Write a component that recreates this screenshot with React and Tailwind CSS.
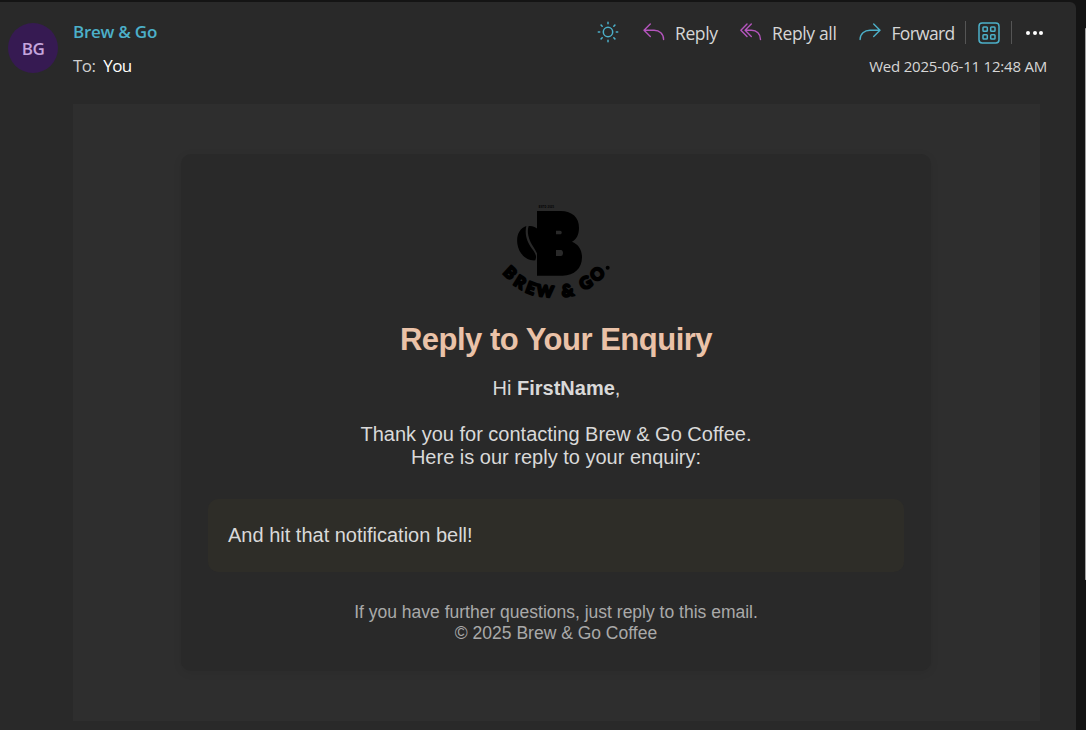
const LOGO_LETTERS = [
  { ch: 'B', x: 61, y: 233, r: 43, s: 49 },
  { ch: 'R', x: 90, y: 261, r: 32, s: 49 },
  { ch: 'E', x: 123, y: 279, r: 20, s: 49 },
  { ch: 'W', x: 165, y: 288, r: 7, s: 48 },
  { ch: '&', x: 233, y: 286, r: -9, s: 50 },
  { ch: 'G', x: 287, y: 263, r: -30, s: 50 },
  { ch: 'O', x: 322, y: 237, r: -42, s: 50 },
];

function Logo() {
  return (
    <svg className="mr-[2px] block h-[110px] w-[130px]" viewBox="0 0 390 330">
      <text x="169" y="39" fontSize="8" fontWeight="700" textAnchor="middle" textLength="46" fontFamily="Liberation Sans, sans-serif">ESTD 2025</text>
      <path
        fillRule="evenodd"
        d="M141 48H212C247 48 267 68 267 98C267 119 260 132 246 140C264 147 276 163 276 187C276 220 253 242 218 242H141ZM198 107V118H210C217 118 217 107 210 107ZM198 165V183H213C221 183 221 165 213 165Z"
      />
      <path d="M109 93C87 101 79 122 82 146C86 176 109 198 136 196C141 184 137 175 126 161C112 142 103 119 109 93Z" />
      <path d="M116 93C128 92 137 96 144 103V182C140 170 133 161 126 149C116 132 110 111 116 93Z" />
      <g fontFamily="Lato, sans-serif" fontWeight="900" stroke="#000" strokeWidth="6" strokeLinejoin="round">
        {LOGO_LETTERS.map((l) => (
          <text
            key={l.ch}
            textAnchor="middle"
            fontSize={l.s}
            transform={`translate(${l.x} ${l.y}) rotate(${l.r}) translate(0 ${l.s * 0.36})`}
          >
            {l.ch}
          </text>
        ))}
      </g>
      <circle cx="353" cy="218" r="6" />
    </svg>
  );
}

const line = { fill: 'none', strokeLinecap: 'round', strokeLinejoin: 'round' };

function SunIcon() {
  return (
    <svg className="block size-[22px]" viewBox="0 0 22 22" stroke="#4cb0c9" strokeWidth="1.5" {...line}>
      <circle cx="11" cy="11" r="4.7" />
      <path d="M11 1.3v1.4M11 19.3v1.4M1.3 11h1.4M19.3 11h1.4M4.1 4.1l1.1 1.1M16.8 16.8l1.1 1.1M4.1 17.9l1.1-1.1M16.8 5.2l1.1-1.1" />
    </svg>
  );
}

function ReplyIcon() {
  return (
    <svg className="block h-[18px] w-[22px]" viewBox="0 0 22 18" stroke="#b455bd" strokeWidth="1.4" {...line}>
      <path d="M7.3 1L1 7.3l6.3 6.2M1.3 7.3H11c5.500 0 9.600 3.700 9.600 9.200" />
    </svg>
  );
}

function ReplyAllIcon() {
  return (
    <svg className="block h-[18px] w-[22px]" viewBox="0 0 22 18" stroke="#b455bd" strokeWidth="1.4" {...line}>
      <path d="M7 1L.9 7.300l6.100 6.200M11.300 1L5.100 7.300l6.200 6.200M5.400 7.300H11.500c5.200 0 9 3.700 9 9.200" />
    </svg>
  );
}

function ForwardIcon() {
  return (
    <svg className="block h-[18px] w-[22px]" viewBox="0 0 22 18" stroke="#4cb0c9" strokeWidth="1.4" {...line}>
      <path d="M14.700 1L21 7.300l-6.300 6.200M20.700 7.300H11C5.500 7.300 1.100 11 1.100 16.500" />
    </svg>
  );
}

function AppsIcon() {
  return (
    <svg className="block size-[22px]" viewBox="0 0 22 22" stroke="#4cb0c9" strokeWidth="1.5" {...line}>
      <rect x="1" y="1" width="20" height="20" rx="3.200" />
      <rect x="5" y="5" width="4.300" height="4.300" rx=".8" />
      <rect x="12.700" y="5" width="4.300" height="4.300" rx=".8" />
      <rect x="5" y="12.700" width="4.300" height="4.300" rx=".8" />
      <rect x="12.700" y="12.700" width="4.300" height="4.300" rx=".8" />
    </svg>
  );
}

function Header() {
  return (
    <header className="flex h-[102px] pl-2 font-['Open_Sans',sans-serif] whitespace-nowrap">
      <div className="mt-[21px] flex size-[50px] items-center justify-center rounded-full bg-[#361a52] pt-px text-[17px] font-semibold tracking-[-0.5px] text-[#c5a5dd]">
        BG
      </div>
      <div className="ml-[15px] flex flex-1 flex-col pt-[18px]">
        <div className="text-[17px] leading-6 font-semibold tracking-[-0.25px] text-[#4cb0c9]">Brew &amp; Go</div>
        <div className="mt-[10px] flex gap-2 text-[17px] leading-6 tracking-[-0.6px]">
          <span className="text-[#d0d0d0]">To:</span>
          <span className="font-medium text-white">You</span>
        </div>
      </div>
      <div className="flex w-[479px] flex-col pt-[18px] text-[#d6d6d6]">
        <div className="flex h-6 items-center text-[17.5px] leading-6">
          <SunIcon />
          <span className="ml-[23.500px]"><ReplyIcon /></span>
          <span className="ml-[10.500px] w-[44px] pt-[2px] tracking-[-0.4px]">Reply</span>
          <span className="ml-[20.500px]"><ReplyAllIcon /></span>
          <span className="ml-[10.500px] w-[66px] pt-[2px] tracking-[-0.35px]">Reply all</span>
          <span className="ml-[20.500px]"><ForwardIcon /></span>
          <span className="ml-[11px] w-[64px] pt-[2px] tracking-[-0.7px]">Forward</span>
          <span className="ml-[9.500px] h-[23px] w-px bg-[#555555]" />
          <span className="ml-[11.500px] pt-px"><AppsIcon /></span>
          <span className="ml-[11.500px] h-[23px] w-px bg-[#555555]" />
          <span className="ml-[14px] flex gap-[2.500px] pt-px">
            <i className="size-[4px] rounded-full bg-white" />
            <i className="size-[4px] rounded-full bg-white" />
            <i className="size-[4px] rounded-full bg-white" />
          </span>
        </div>
        <div className="mt-[10px] flex w-[450px] justify-end text-[15px] leading-6 tracking-[-0.21px]">Wed 2025-06-11 12:48 AM</div>
      </div>
    </header>
  );
}

function Message() {
  return (
    <main className="ml-[73px] flex h-[617px] w-[967px] bg-[#2e2e2e] pt-[50px] pl-[108px] font-['Liberation_Sans',Arial,sans-serif]">
      <article className="flex h-[517px] w-[750px] flex-col items-center rounded-[10px] bg-[#292929] pt-[41px] text-center text-[20px] leading-[23px] text-[#d9d9d9] shadow-[0_2px_10px_rgba(0,0,0,0.07)]">
        <Logo />
        <h1 className="mt-[16px] text-[31px] leading-[37px] font-bold tracking-[-0.5px] text-[#eac2a8]">Reply to Your Enquiry</h1>
        <p className="mt-[19px] pl-px">
          Hi <strong className="font-bold">FirstName</strong>,
        </p>
        <p className="mt-[23px]">
          Thank you for contacting Brew &amp; Go Coffee.
          <br />
          Here is our reply to your enquiry:
        </p>
        <div className="mt-[30px] flex h-[73px] w-[696px] items-center rounded-[10px] bg-[#2e2d28] px-5 text-left">
          And hit that notification bell!
        </div>
        <footer className="mt-[30px] text-[17.5px] leading-[21px] text-[#a9a9a9]">
          If you have further questions, just reply to this email.
          <br />© 2025 Brew &amp; Go Coffee
        </footer>
      </article>
    </main>
  );
}

export default function App() {
  return (
    <div className="flex h-[730px] w-[1086px] justify-between overflow-hidden bg-[#141414] pt-[2px]">
      <div className="h-[728px] w-[1076px] rounded-tr-[6px] bg-[#292929]">
        <Header />
        <Message />
      </div>
      <div className="mt-[26px] h-[552px] w-px rounded-full bg-[#9f9f9f]" />
    </div>
  );
}
